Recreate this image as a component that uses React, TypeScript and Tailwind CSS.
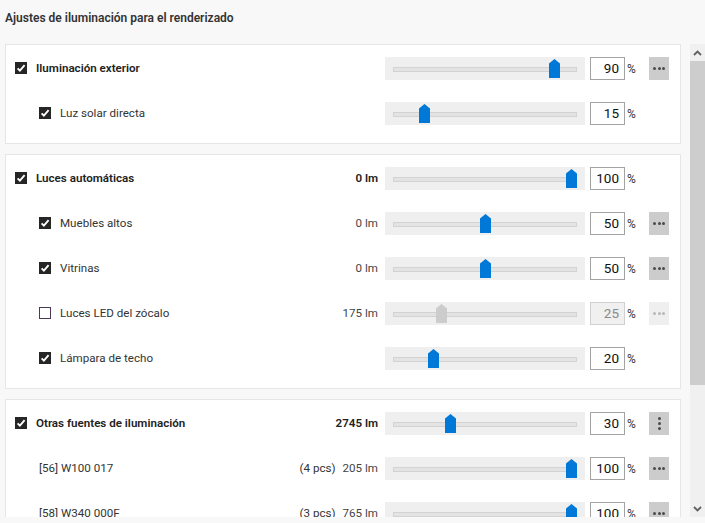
import React from "react";

type Row = {
  label: string;
  level: 0 | 1;
  checkbox?: "on" | "off" | "none";
  lm?: string;
  pcs?: string;
  value: number;
  disabled?: boolean;
  menu?: "h" | "v" | "hd" | "none";
};

const cards: Row[][] = [
  [
    { label: "Iluminación exterior", level: 0, checkbox: "on", value: 90, menu: "h" },
    { label: "Luz solar directa", level: 1, checkbox: "on", value: 15, menu: "none" },
  ],
  [
    { label: "Luces automáticas", level: 0, checkbox: "on", lm: "0 lm", value: 100, menu: "none" },
    { label: "Muebles altos", level: 1, checkbox: "on", lm: "0 lm", value: 50, menu: "h" },
    { label: "Vitrinas", level: 1, checkbox: "on", lm: "0 lm", value: 50, menu: "h" },
    { label: "Luces LED del zócalo", level: 1, checkbox: "off", lm: "175 lm", value: 25, disabled: true, menu: "hd" },
    { label: "Lámpara de techo", level: 1, checkbox: "on", value: 20, menu: "none" },
  ],
  [
    { label: "Otras fuentes de iluminación", level: 0, checkbox: "on", lm: "2745 lm", value: 30, menu: "v" },
    { label: "[56] W100 017", level: 1, checkbox: "none", pcs: "(4 pcs)", lm: "205 lm", value: 100, menu: "h" },
    { label: "[58] W340 000F", level: 1, checkbox: "none", pcs: "(3 pcs)", lm: "765 lm", value: 100, menu: "h" },
  ],
];

function Checkbox({ on }: { on: boolean }) {
  if (!on) {
    return <div className="w-[12px] h-[12px] shrink-0 bg-white border border-[#4a3a55]" />;
  }
  return (
    <div className="w-[12px] h-[12px] shrink-0 bg-[#262626] flex items-center justify-center">
      <svg width="12" height="12" viewBox="0 0 12 12">
        <path d="M2.6 6.3 L4.9 8.6 L9.6 3.2" fill="none" stroke="#ffffff" strokeWidth="1.9" />
      </svg>
    </div>
  );
}

function Slider({ value, disabled }: { value: number; disabled?: boolean }) {
  const left = 8 + (173 * value) / 100;
  return (
    <div className="relative w-[200px] h-[23px] bg-[#efefef] shrink-0">
      <div className="absolute left-[8px] top-[10px] w-[184px] h-[5px] bg-[#e3e3e3] border border-[#d3d3d3]" />
      <svg
        className="absolute top-[2px]"
        style={{ left }}
        width="11"
        height="19"
        viewBox="0 0 11 19"
      >
        <polygon points="5.5,0 11,4.5 11,19 0,19 0,4.5" fill={disabled ? "#cccccc" : "#0078d7"} />
      </svg>
    </div>
  );
}

function Menu({ kind }: { kind: Row["menu"] }) {
  if (kind === "none" || !kind) return <div className="w-[20px] h-[23px] shrink-0" />;
  const disabled = kind === "hd";
  const dot = disabled ? "bg-[#b8b8b8]" : "bg-[#4a4a4a]";
  return (
    <div
      className={`w-[20px] h-[23px] shrink-0 flex items-center justify-center ${
        disabled ? "bg-[#efefef]" : "bg-[#cccccc]"
      } ${kind === "v" ? "flex-col gap-[2px]" : "flex-row gap-[1.5px]"}`}
    >
      <div className={`w-[3px] h-[3px] rounded-full ${dot}`} />
      <div className={`w-[3px] h-[3px] rounded-full ${dot}`} />
      <div className={`w-[3px] h-[3px] rounded-full ${dot}`} />
    </div>
  );
}

function RowView({ row }: { row: Row }) {
  const bold = row.level === 0;
  return (
    <div className="h-[45px] flex items-center pr-[11px]">
      <div className={`flex items-center flex-1 min-w-0 ${row.level === 0 ? "pl-[9px]" : "pl-[33px]"}`}>
        {row.checkbox !== "none" && (
          <div className="mr-[9px]">
            <Checkbox on={row.checkbox === "on"} />
          </div>
        )}
        <span
          className={`text-[11.6px] whitespace-nowrap ${
            bold ? "font-semibold text-[#222222]" : "text-[#333333]"
          }`}
        >
          {row.label}
        </span>
        <div className="flex-1" />
        {row.pcs && <span className="text-[11.6px] text-[#333333] mr-[7px] whitespace-nowrap">{row.pcs}</span>}
        {row.lm && (
          <span
            className={`text-[11.6px] whitespace-nowrap ${
              bold ? "font-semibold text-[#222222]" : "text-[#444444]"
            }`}
          >
            {row.lm}
          </span>
        )}
      </div>
      <div className="ml-[7px]">
        <Slider value={row.value} disabled={row.disabled} />
      </div>
      <div
        className={`ml-[5px] w-[35px] h-[23px] shrink-0 border flex items-center justify-end pr-[5px] text-[13.5px] ${
          row.disabled
            ? "bg-[#f0f0f0] border-[#d0d0d0] text-[#8a8a8a]"
            : "bg-white border-[#a3a3a3] text-[#111111]"
        }`}
      >
        {row.value}
      </div>
      <div className="w-[24px] pl-[2px] text-[12px] text-[#333333] shrink-0">%</div>
      <Menu kind={row.menu} />
    </div>
  );
}

export default function App() {
  return (
    <div
      className="w-[705px] h-[523px] bg-[#f8f8f8] overflow-hidden"
      style={{ fontFamily: "Roboto, 'Noto Sans', sans-serif" }}
    >
      <div className="h-[44px] pl-[5px] pt-[10px] text-[12px] leading-[16px] font-semibold text-[#333333]">
        Ajustes de iluminación para el renderizado
      </div>
      <div className="flex h-[473px]">
        <div className="flex-1 overflow-hidden pl-[5px] pr-[9px] flex flex-col gap-[10px]">
          {cards.map((rows, i) => (
            <div key={i} className="bg-white border border-[#e6e6e6] pt-[1px] pb-[7px] shrink-0">
              {rows.map((r, j) => (
                <RowView key={j} row={r} />
              ))}
            </div>
          ))}
        </div>
        <div className="w-[15px] h-full bg-[#f0f0f0] flex flex-col shrink-0">
          <div className="h-[17px] flex items-center justify-center">
            <svg width="9" height="6" viewBox="0 0 9 6">
              <path d="M1 5 L4.5 1.5 L8 5" fill="none" stroke="#606060" strokeWidth="1.8" />
            </svg>
          </div>
          <div className="h-[324px] bg-[#cdcdcd]" />
          <div className="flex-1" />
          <div className="h-[17px] flex items-center justify-center">
            <svg width="9" height="6" viewBox="0 0 9 6">
              <path d="M1 1 L4.5 4.5 L8 1" fill="none" stroke="#606060" strokeWidth="1.8" />
            </svg>
          </div>
        </div>
      </div>
    </div>
  );
}
